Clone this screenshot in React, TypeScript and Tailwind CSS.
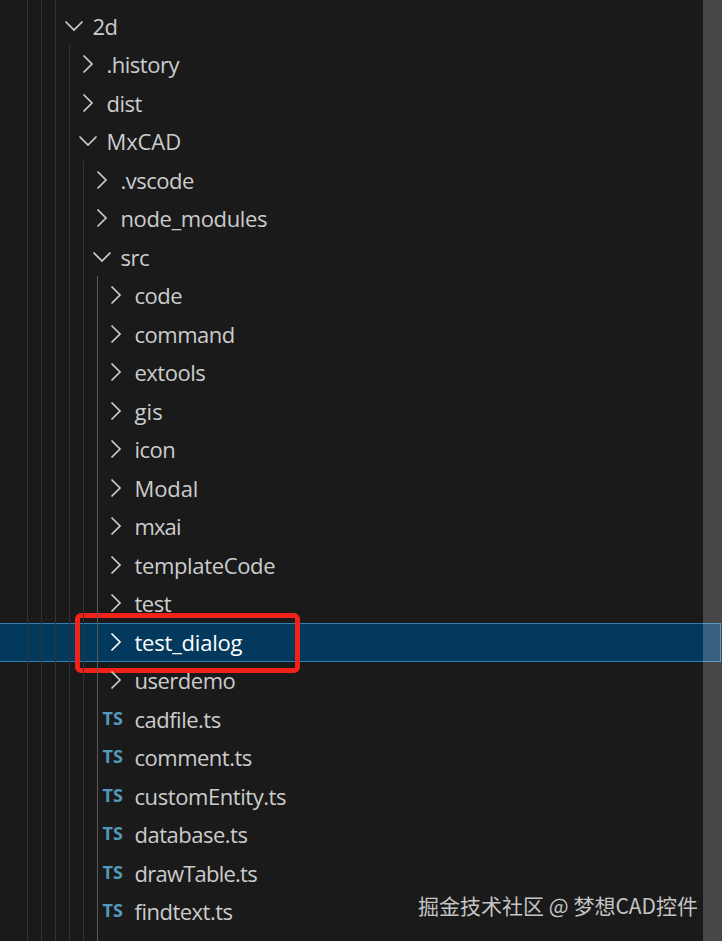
const rows: { t: string; d: number; k: "o" | "c" | "f"; s?: string }[] = [
  { t: "2d", d: 0, k: "o" },
  { t: ".history", d: 1, k: "c" },
  { t: "dist", d: 1, k: "c" },
  { t: "MxCAD", d: 1, k: "o", s: "tracking-[-0.1px]" },
  { t: ".vscode", d: 2, k: "c" },
  { t: "node_modules", d: 2, k: "c", s: "tracking-[-0.38px]" },
  { t: "src", d: 2, k: "o" },
  { t: "code", d: 3, k: "c" },
  { t: "command", d: 3, k: "c" },
  { t: "extools", d: 3, k: "c" },
  { t: "gis", d: 3, k: "c", s: "tracking-[0.1px]" },
  { t: "icon", d: 3, k: "c" },
  { t: "Modal", d: 3, k: "c", s: "tracking-[-0.1px]" },
  { t: "mxai", d: 3, k: "c", s: "tracking-[-0.9px]" },
  { t: "templateCode", d: 3, k: "c", s: "tracking-[-0.35px]" },
  { t: "test", d: 3, k: "c" },
  { t: "test_dialog", d: 3, k: "c", s: "tracking-[-0.22px]" },
  { t: "userdemo", d: 3, k: "c" },
  { t: "cadfile.ts", d: 3, k: "f" },
  { t: "comment.ts", d: 3, k: "f" },
  { t: "customEntity.ts", d: 3, k: "f", s: "tracking-[-0.43px]" },
  { t: "database.ts", d: 3, k: "f" },
  { t: "drawTable.ts", d: 3, k: "f", s: "tracking-[-0.76px]" },
  { t: "findtext.ts", d: 3, k: "f" },
];

const indent = ["pl-[64px]", "pl-[78px]", "pl-[92px]", "pl-[106px]"];

function Chevron({ open }: { open: boolean }) {
  return (
    <span className="flex w-[28.5px] shrink-0 items-center">
      <svg width="20" height="20" viewBox="0 0 20 20" fill="none" stroke="currentColor" strokeWidth="1.7">
        {open ? <path d="M1.5 5.5 L10 14 L18.5 5.5" /> : <path d="M5.5 1.5 L14 10 L5.5 18.5" />}
      </svg>
    </span>
  );
}

function Row({ t, d, k, s }: { t: string; d: number; k: "o" | "c" | "f"; s?: string }) {
  const sel = t === "test_dialog";
  return (
    <div
      className={`relative flex h-[38.5px] items-center pb-[2px] ${k === "f" ? "pl-[102.5px]" : indent[d]} ${
        sel ? "mr-px border-y border-r border-[#2f7fb3] bg-[#04395e] text-white" : ""
      }`}
    >
      {k === "f" ? (
        <span className="w-[32px] shrink-0 pb-[2px] text-[18px] font-bold leading-none text-[#519aba]">TS</span>
      ) : (
        <Chevron open={k === "o"} />
      )}
      <span className={`text-[22px] leading-none ${s ?? "tracking-[-0.5px]"}`}>{t}</span>
      {sel && (
        <div className="absolute left-[75px] top-[-11px] h-[60px] w-[225px] rounded-[6px] border-[5px] border-[#f2211a]" />
      )}
    </div>
  );
}

export default function App() {
  return (
    <div
      className="relative h-[941px] w-[722px] overflow-hidden bg-[#1a1a1a] pt-[7.4px] text-[#cccccc]"
      style={{ fontFamily: '"Open Sans", "Noto Sans", sans-serif' }}
    >
      {rows.map((r) => (
        <Row key={r.t} {...r} />
      ))}

      <div className="pointer-events-none absolute inset-y-0 left-[27px] flex gap-[13px]">
        <div className="w-px bg-[#333333]" />
        <div className="w-px bg-[#333333]" />
        <div className="w-px bg-[#333333]" />
        <div className="mt-[45px] w-px bg-[#333333]" />
        <div className="mt-[161px] w-px bg-[#333333]" />
        <div className="mt-[276px] w-px bg-[#585858]" />
      </div>

      <div className="absolute inset-y-0 right-0 w-[19px] bg-white/20" />
      <div
        className="absolute bottom-[21px] right-[24px] text-[21px] leading-[30px] text-[#c4c4c4]"
        style={{ fontFamily: '"Noto Sans CJK SC", sans-serif' }}
      >
        掘金技术社区 @ 梦想CAD控件
      </div>
    </div>
  );
}
